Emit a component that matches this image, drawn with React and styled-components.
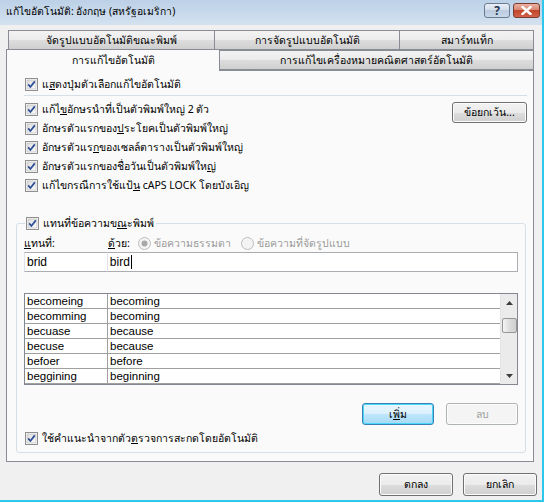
import React from "react"
import styled, { createGlobalStyle } from "styled-components"

const GlobalStyle = createGlobalStyle`
  body {
    margin: 0;
    background: #ffffff;
    font-family: Tahoma, "Noto Sans", "DejaVu Sans", sans-serif;
    font-size: 10.5px;
    color: #000;
  }
  * { box-sizing: border-box; }
`

const Window = styled.div`
  width: 544px;
  height: 502px;
  border-right: 2px solid #2fc6ec;
  border-bottom: 2px solid #2fc6ec;
  background: #f0f0f0;
  display: flex;
  flex-direction: column;
`

const TitleBar = styled.div`
  height: 25px;
  flex: none;
  display: flex;
  align-items: flex-start;
  justify-content: space-between;
  padding: 0 2px 0 6px;
  background: linear-gradient(#bcd1e7, #d4e1ef);
`

const TitleText = styled.div`
  font-size: 10.3px;
  line-height: 22px;
`

const TitleButtons = styled.div`
  display: flex;
  gap: 3px;
  margin-top: 3px;
`

const CaptionButton = styled.div`
  width: ${p => (p.close ? 27 : 26)}px;
  height: 15px;
  border-radius: 3px;
  border: 1px solid ${p => (p.close ? "#7a3b30" : "#6b7b92")};
  background: ${p =>
    p.close
      ? "linear-gradient(#eab1a2 0%, #d98874 45%, #c2452c 50%, #d1614a 100%)"
      : "linear-gradient(#e8eef6 0%, #d3deeb 45%, #bccbe0 50%, #c9d7e9 100%)"};
  display: flex;
  align-items: center;
  justify-content: center;
  font-size: 12px;
  font-weight: bold;
  color: #24344e;
`

const Client = styled.div`
  flex: 1;
  display: flex;
  flex-direction: column;
  padding: 4px 8px 0 6px;
`

const TabRow = styled.div`
  display: flex;
  align-items: flex-end;
  padding-left: ${p => p.indent || 0}px;
  height: ${p => p.h}px;
`

const Tab = styled.div`
  width: ${p => p.w}px;
  height: ${p => (p.active ? 22 : 20)}px;
  border: 1px solid #898c95;
  border-bottom: ${p => (p.active ? "none" : "1px solid #898c95")};
  margin-left: ${p => (p.first ? 0 : -1)}px;
  background: ${p =>
    p.active ? "#fafafa" : "linear-gradient(#f3f3f3 0%, #ebebeb 50%, #dddddd 51%, #cfcfcf 100%)"};
  display: flex;
  align-items: center;
  justify-content: center;
  position: relative;
  z-index: ${p => (p.active ? 2 : 1)};
  margin-bottom: ${p => (p.active ? -1 : 0)}px;
`

const Panel = styled.div`
  width: 528px;
  height: 392px;
  border: 1px solid #898c95;
  background: #fafafa;
  padding: 4px 6px 0 9px;
  display: flex;
  flex-direction: column;
`

const CheckRow = styled.label`
  display: flex;
  align-items: center;
  gap: 4px;
  height: 19px;
  padding-left: ${p => p.indent ?? 9}px;
  white-space: nowrap;
  color: ${p => (p.disabled ? "#9a9a9a" : "#000")};
`

const Separator = styled.div`
  height: 1px;
  background: #d5dfe5;
  margin: 1px 0 4px 8px;
`

const OptionsBlock = styled.div`
  display: flex;
  justify-content: space-between;
  align-items: flex-start;
`

const Column = styled.div`
  display: flex;
  flex-direction: column;
`

const Button = styled.div`
  width: ${p => p.w || 74}px;
  height: ${p => p.h || 22}px;
  border-radius: 3px;
  border: 1px solid ${p => (p.primary ? "#3c7fb1" : p.disabled ? "#adb2b5" : "#707070")};
  box-shadow: ${p => (p.primary ? "inset 0 0 0 1px #48d8fb" : "inset 0 0 0 1px #fcfcfc")};
  background: ${p =>
    p.disabled
      ? "#f4f4f4"
      : p.primary
      ? "linear-gradient(#eaf6fd 0%, #d9f0fc 50%, #bee6fd 51%, #a7d9f5 100%)"
      : "linear-gradient(#f2f2f2 0%, #ebebeb 50%, #dddddd 51%, #cfcfcf 100%)"};
  color: ${p => (p.disabled ? "#a0a0a0" : "#000")};
  display: flex;
  align-items: center;
  justify-content: center;
  margin-top: ${p => p.mt || 0}px;
`

const Group = styled.fieldset`
  margin: 19px 0 0 0;
  padding: 0 7px 4px 7px;
  width: 510px;
  border: 1px solid #d5dfe5;
  border-radius: 3px;
  min-width: 0;
`

const Legend = styled.legend`
  padding: 0 2px 0 1px;
  margin-left: 1px;
`

const LabelRow = styled.div`
  display: flex;
  align-items: center;
  height: 17px;
  margin-top: 2px;
`

const FieldLabel = styled.div`
  width: ${p => p.w}px;
  flex: none;
`

const Radio = styled.div`
  display: flex;
  align-items: center;
  gap: 3px;
  margin-right: 10px;
  color: #9b9b9b;
`

const InputRow = styled.div`
  display: flex;
  height: 20px;
`

const Input = styled.div`
  width: ${p => p.w}px;
  height: 20px;
  border: 1px solid #abadb3;
  border-left-color: #e2e3ea;
  border-top-color: #abadb3;
  background: #fff;
  margin-left: ${p => (p.first ? 0 : -1)}px;
  padding-left: 2px;
  font-family: "Liberation Sans", Arial, sans-serif;
  font-size: 12px;
  line-height: 18px;
  display: flex;
  align-items: center;
`

const Caret = styled.span`
  display: inline-block;
  width: 1px;
  height: 14px;
  background: #000;
  margin-left: 1px;
`

const List = styled.div`
  margin-top: 21px;
  height: 92px;
  border: 1px solid #828790;
  background: #fff;
  display: flex;
`

const ListBody = styled.div`
  flex: 1;
  display: flex;
  flex-direction: column;
`

const ListRow = styled.div`
  display: flex;
  height: 15px;
  border-bottom: 1px solid #a0a0a0;
  font-family: "Liberation Sans", Arial, sans-serif;
  font-size: 11.5px;
  line-height: 14px;
`

const Cell = styled.div`
  width: ${p => p.w || "auto"};
  flex: ${p => (p.w ? "none" : 1)};
  padding-left: 2px;
  border-right: ${p => (p.w ? "1px solid #a0a0a0" : "none")};
`

const ScrollBar = styled.div`
  width: 17px;
  background: #ebebeb;
  border-left: 1px solid #e4e4e4;
  display: flex;
  flex-direction: column;
  align-items: center;
`

const Arrow = styled.div`
  height: 17px;
  display: flex;
  align-items: center;
  justify-content: center;
`

const Thumb = styled.div`
  width: 15px;
  height: 15px;
  margin-top: 7px;
  border: 1px solid #959595;
  border-radius: 2px;
  background: linear-gradient(90deg, #f4f4f4, #dcdcdc 50%, #cfcfcf);
`

const Spacer = styled.div`
  flex: 1;
`

const ButtonRow = styled.div`
  display: flex;
  justify-content: flex-end;
  gap: 12px;
  margin-top: 18px;
`

const FooterCheck = styled(CheckRow)`
  margin-top: 4px;
`

const DialogButtons = styled.div`
  display: flex;
  justify-content: flex-end;
  gap: 10px;
  margin: 11px -3px 0 0;
`

const Check = ({ checked = true }) => (
  <svg width="13" height="13" viewBox="0 0 13 13">
    <defs>
      <linearGradient id="cb" x1="0" y1="0" x2="1" y2="1">
        <stop offset="0" stopColor="#dcdcdc" />
        <stop offset="1" stopColor="#fbfbfb" />
      </linearGradient>
    </defs>
    <rect x="0.5" y="0.5" width="12" height="12" fill="#fff" stroke="#8f8f8f" />
    <rect x="2" y="2" width="9" height="9" fill="url(#cb)" stroke="#b4b4b4" strokeWidth="0.6" />
    {checked && (
      <path d="M3.2 6.4 L5.4 9 L9.8 3.4" fill="none" stroke="#2a4d95" strokeWidth="1.7" />
    )}
  </svg>
)

const RadioDot = ({ on }) => (
  <svg width="13" height="13" viewBox="0 0 13 13">
    <circle cx="6.5" cy="6.5" r="6" fill="#f4f4f4" stroke="#bcbcbc" />
    {on && <circle cx="6.5" cy="6.5" r="3" fill="#a8a8a8" />}
  </svg>
)

const Tri = ({ down }) => (
  <svg width="7" height="4" viewBox="0 0 7 4">
    <path d={down ? "M0 0 L7 0 L3.5 4 Z" : "M0 4 L7 4 L3.5 0 Z"} fill="#3d3d3d" />
  </svg>
)

const CloseGlyph = () => (
  <svg width="11" height="9" viewBox="0 0 11 9">
    <path d="M1.5 1 L9.5 8 M9.5 1 L1.5 8" stroke="#fff" strokeWidth="2.4" strokeLinecap="square" />
  </svg>
)

const entries = [
  ["becomeing", "becoming"],
  ["becomming", "becoming"],
  ["becuase", "because"],
  ["becuse", "because"],
  ["befoer", "before"],
  ["beggining", "beginning"],
]

const options = [
  <>แก้ไ<u>ข</u>อักษรนำที่เป็นตัวพิมพ์ใหญ่ 2 ตัว</>,
  <>อักษรตัวแรกของ<u>ป</u>ระโยคเป็นตัวพิมพ์ใหญ่</>,
  <>อักษรตัวแร<u>ก</u>ของเซลล์ตารางเป็นตัวพิมพ์ใหญ่</>,
  <>อักษรตัวแรกของชื่อวันเป็นตัวพิมพ์ให<u>ญ่</u></>,
  <>แก้ไขกรณีการใช้แป้<u>น</u> cAPS LOCK โดยบังเอิญ</>,
]

export default function App() {
  return (
    <>
      <GlobalStyle />
      <Window>
        <TitleBar>
          <TitleText>แก้ไขอัตโนมัติ: อังกฤษ (สหรัฐอเมริกา)</TitleText>
          <TitleButtons>
            <CaptionButton>?</CaptionButton>
            <CaptionButton close>
              <CloseGlyph />
            </CaptionButton>
          </TitleButtons>
        </TitleBar>
        <Client>
          <TabRow indent={2} h={21}>
            <Tab first w={207}>จัดรูปแบบอัตโนมัติขณะพิมพ์</Tab>
            <Tab w={186}>การจัดรูปแบบอัตโนมัติ</Tab>
            <Tab w={135}>สมาร์ทแท็ก</Tab>
          </TabRow>
          <TabRow h={20}>
            <Tab first active w={214}>การแก้ไขอัตโนมัติ</Tab>
            <Tab w={315}>การแก้ไขเครื่องหมายคณิตศาสตร์อัตโนมัติ</Tab>
          </TabRow>
          <Panel>
            <CheckRow>
              <Check />
              <span>แ<u>ส</u>ดงปุ่มตัวเลือกแก้ไขอัตโนมัติ</span>
            </CheckRow>
            <Separator />
            <OptionsBlock>
              <Column>
                {options.map((o, i) => (
                  <CheckRow key={i}>
                    <Check />
                    <span>{o}</span>
                  </CheckRow>
                ))}
              </Column>
              <Button w={75} h={21} mt={2}>ข้อยกเว้น...</Button>
            </OptionsBlock>
            <Group>
              <Legend>
                <CheckRow indent={0}>
                  <Check />
                  <span>แทนที่ข้อความข<u>ณ</u>ะพิมพ์</span>
                </CheckRow>
              </Legend>
              <LabelRow>
                <FieldLabel w={84}><u>แ</u>ทนที่:</FieldLabel>
                <FieldLabel w={30}><u>ด</u>้วย:</FieldLabel>
                <Radio>
                  <RadioDot on />
                  <span>ข้อความธรรมดา</span>
                </Radio>
                <Radio>
                  <RadioDot />
                  <span>ข้อความที่จัดรูปแบบ</span>
                </Radio>
              </LabelRow>
              <InputRow>
                <Input first w={84}>brid</Input>
                <Input w={412}>
                  bird
                  <Caret />
                </Input>
              </InputRow>
              <List>
                <ListBody>
                  {entries.map(([from, to]) => (
                    <ListRow key={from}>
                      <Cell w="83px">{from}</Cell>
                      <Cell>{to}</Cell>
                    </ListRow>
                  ))}
                </ListBody>
                <ScrollBar>
                  <Arrow>
                    <Tri />
                  </Arrow>
                  <Thumb />
                  <Spacer />
                  <Arrow>
                    <Tri down />
                  </Arrow>
                </ScrollBar>
              </List>
              <ButtonRow>
                <Button primary w={72}>เ<u>พิ</u>่ม</Button>
                <Button disabled w={72}>ลบ</Button>
              </ButtonRow>
              <FooterCheck indent={1}>
                <Check />
                <span>ใช้คำแนะนำจากตัว<u>ต</u>รวจการสะกดโดยอัตโนมัติ</span>
              </FooterCheck>
            </Group>
          </Panel>
          <DialogButtons>
            <Button w={74} h={23}>ตกลง</Button>
            <Button w={74} h={23}>ยกเลิก</Button>
          </DialogButtons>
        </Client>
      </Window>
    </>
  )
}
